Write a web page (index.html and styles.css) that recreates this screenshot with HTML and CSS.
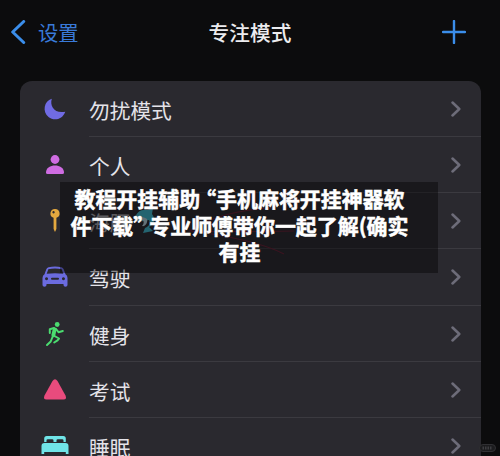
FILE: index.html
```html
<!DOCTYPE html>
<html lang="zh-CN">
<head>
<meta charset="utf-8">
<title>专注模式</title>
<link rel="stylesheet" href="styles.css">
</head>
<body>
<svg class="defs" width="0" height="0"><symbol id="chev" viewBox="0 0 10 16"><path d="M1.500 1.500 8.300 8l-6.800 6.500" fill="none" stroke="currentColor" stroke-width="2.500" stroke-linecap="round" stroke-linejoin="round"/></symbol></svg>
<main class="screen">
  <header class="nav">
    <a class="back"><svg width="16" height="24" viewBox="0 0 16 24"><path d="M13.700 1.500 2.700 12l11 10.500" fill="none" stroke="currentColor" stroke-width="3" stroke-linecap="round" stroke-linejoin="round"/></svg><span>设置</span></a>
    <h1>专注模式</h1>
    <svg class="plus" width="24" height="24" viewBox="0 0 24 24"><path d="M12 1v22M1 12h22" stroke="currentColor" stroke-width="2.400" stroke-linecap="round"/></svg>
  </header>
  <ul class="list">
    <li class="row"><span class="icon moon"><svg width="30" height="30" viewBox="0 0 30 30"><path d="M11.800 4.700C9.500 12 14.500 20 25.300 17.700 22.500 25.500 14 27.500 8.500 23 2 17.500 4 7 11.800 4.700Z"/></svg></span><div class="cell"><span>勿扰模式</span><svg class="chev"><use href="#chev"/></svg></div></li>
    <li class="row"><span class="icon person"><svg width="30" height="30" viewBox="0 0 30 30"><circle cx="15" cy="9.500" r="4.400"/><path d="M6 22.500c0-9.500 18-9.500 18 0q0 1.500-1.500 1.500h-15Q6 24 6 22.500Z"/></svg></span><div class="cell"><span>个人</span><svg class="chev"><use href="#chev"/></svg></div></li>
    <li class="row"><span class="icon pin"><svg width="30" height="30" viewBox="0 0 30 30"><path fill-rule="evenodd" d="M15 3a4.500 4.500 0 0 1 1.400 8.800V23L15 26l-1.400-3V11.800A4.500 4.500 0 0 1 15 3Zm-1.500 2a1.200 1.200 0 1 0 .1 0Z"/></svg></span><div class="cell"><span class="dim">海豚</span><svg class="dolphin" width="22" height="28" viewBox="0 0 22 28"><path class="body" d="M1 13C1 5 8 2 13 3l6-2-1 6c4 5 2 11-3 13l4 4-5 1-5 1 2-5c5-2 5-5 4-8-3 0-6 3-14 0Z"/><path class="belly" d="M1 13c4-3 8-4 12-1 1 4-2 8-5 7 2-2 2-4 1-6-3 0-5 1-8 0Z"/></svg><svg class="chev"><use href="#chev"/></svg></div></li>
    <li class="row"><span class="icon car"><svg width="30" height="30" viewBox="0 0 30 30"><path fill-rule="evenodd" d="M8.500 5.200Q15 4 21.500 5.200q1.600.4 2.200 2l1.800 5q2 1 2 3.800v7q0 1.800-2 1.800t-2-1.800v-1h-17v1q0 1.800-2 1.800t-2-1.800v-7q0-2.800 2-3.800l1.800-5q.6-1.600 2.200-2Zm-.2 2-1.600 4.500q8.300-1 16.600 0L21.700 7.200Q15 6 8.300 7.200ZM6.500 15.200a1.500 1.500 0 1 0 .1 0Zm16.900 0a1.500 1.500 0 1 0 .1 0ZM12 15.800a1 1 0 0 0 0 2h6a1 1 0 0 0 0-2Z"/></svg></span><div class="cell"><span>驾驶</span><svg class="chev"><use href="#chev"/></svg></div></li>
    <li class="row"><span class="icon runner"><svg width="30" height="30" viewBox="0 0 30 30"><circle cx="17.200" cy="5.500" r="2.400"/><g fill="none" stroke="currentColor" stroke-linecap="round" stroke-linejoin="round"><path stroke-width="2" d="m14 9-4.200 1.300v3.700M16 10l2.500 3.200 4.300-1.200M12.500 18l-1.800 4.500-3.700 3.500M14.500 17l4.500 2.500-1.500 1.800-3.300 2.200"/><path stroke-width="3.800" d="m14.700 10.300-1.400 6"/></g></svg></span><div class="cell"><span>健身</span><svg class="chev"><use href="#chev"/></svg></div></li>
    <li class="row"><span class="icon triangle"><svg width="30" height="30" viewBox="0 0 30 30"><path d="M12.500 6q2.500-3.500 5 0l8 14.500q1.700 4-2 4h-17q-3.700 0-2-4Z"/></svg></span><div class="cell"><span>考试</span><svg class="chev"><use href="#chev"/></svg></div></li>
    <li class="row"><span class="icon bed"><svg width="30" height="30" viewBox="0 0 30 30"><path d="M4.200 11V7.500Q4.200 5 6.700 5h16.600q2.500 0 2.500 2.500V11h-2.300V9.500q0-1.300-1.300-1.300h-4.400q-1.300 0-1.300 1.300V11h-3V9.500q0-1.300-1.300-1.300H7.800q-1.300 0-1.300 1.300V11ZM1.500 15q0-3 3-3h21q3 0 3 3v8h-2.700v-2H4.200v2H1.500Z"/></svg></span><div class="cell"><span>睡眠</span><svg class="chev"><use href="#chev"/></svg></div></li>
  </ul>
  <div class="caption"><svg class="scribble" width="378" height="91" viewBox="0 0 378 91"><path d="M214 26Q160 28 130 49q50 1 104 0M130 49q65 8 94 23"/></svg><p>教程开挂辅助<span class="q open">“</span>手机麻将开挂神器软</p><p>件下载<span class="q close">”</span>专业师傅带你一起了解(确实</p><p>有挂</p></div>
  <svg class="mark" width="17" height="8" viewBox="0 0 17 8"><rect x=".5" y=".5" width="16" height="7" rx="3.500" fill="#1c1c1e" stroke="#303033"/><path d="M3.500 4h10" stroke="#3d3d40" stroke-width="3" stroke-dasharray="1.500 1"/></svg>
</main>
</body>
</html>
```
FILE: styles.css
```css
* { box-sizing: border-box; }
body { margin: 0; background: #0c0c0d; font-family: "Noto Sans CJK SC", sans-serif; }
.defs { position: absolute; }
.screen { position: relative; width: 500px; height: 456px; overflow: hidden; color: #e4e3e9; }
.nav { display: grid; grid-template-columns: 1fr auto 1fr; align-items: center; height: 63px; padding: 0 10px; color: #3b8eea; }
.nav h1 { margin: 0; font-size: 20.7px; font-weight: 500; line-height: 30px; color: #ececef; }
.back { display: flex; align-items: center; gap: 12px; font-size: 20.3px; line-height: 30px; }
.back span { color: #397ad9; }
.plus { justify-self: end; margin-right: 24px; }
.list { list-style: none; margin: 18px 19px 0 20px; padding: 0; background: #2a292f; border-radius: 12px 12px 0 0; }
.row { display: flex; height: 56.15px; padding-left: 20px; }
.icon { width: 30px; height: 56px; display: flex; align-items: center; }
.icon svg { fill: currentColor; }
.moon { color: #706be4; }
.person { color: #cf6ce2; }
.pin { color: #e4a83f; }
.car { color: #6b6bdf; }
.runner { color: #4bdc70; }
.triangle { color: #e94b7d; }
.bed { color: #70e4e8; }
.cell { flex: 1; display: flex; align-items: center; margin-left: 19px; padding: 1px 20px 0 0; font-size: 20.7px; line-height: 30px; border-bottom: 1px solid #3b3a40; }
.cell > span { padding-top: 2px; }
.dim { opacity: .6; }
.chev { width: 10px; height: 16px; margin-left: auto; color: #6d6c79; }
.dolphin { margin-left: 4px; }
.body { fill: #3da7bb; }
.belly { fill: #a6bec8; }
.caption { position: absolute; left: 60px; top: 182px; width: 378px; height: 91px; padding: 3px 19px 0 0; background: rgba(0, 0, 0, .4); color: #fff; text-align: center; font-size: 20.95px; font-weight: 700; -webkit-text-stroke: .5px #fff; }
.caption p { position: relative; margin: 0; line-height: 26.6px; white-space: nowrap; }
.q { display: inline-flex; width: 16px; }
.open { justify-content: flex-end; }
.scribble { position: absolute; left: 0; top: 0; fill: none; stroke: #3b1420; stroke-width: 1.200; }
.mark { position: absolute; left: 479px; top: 444px; }
```
